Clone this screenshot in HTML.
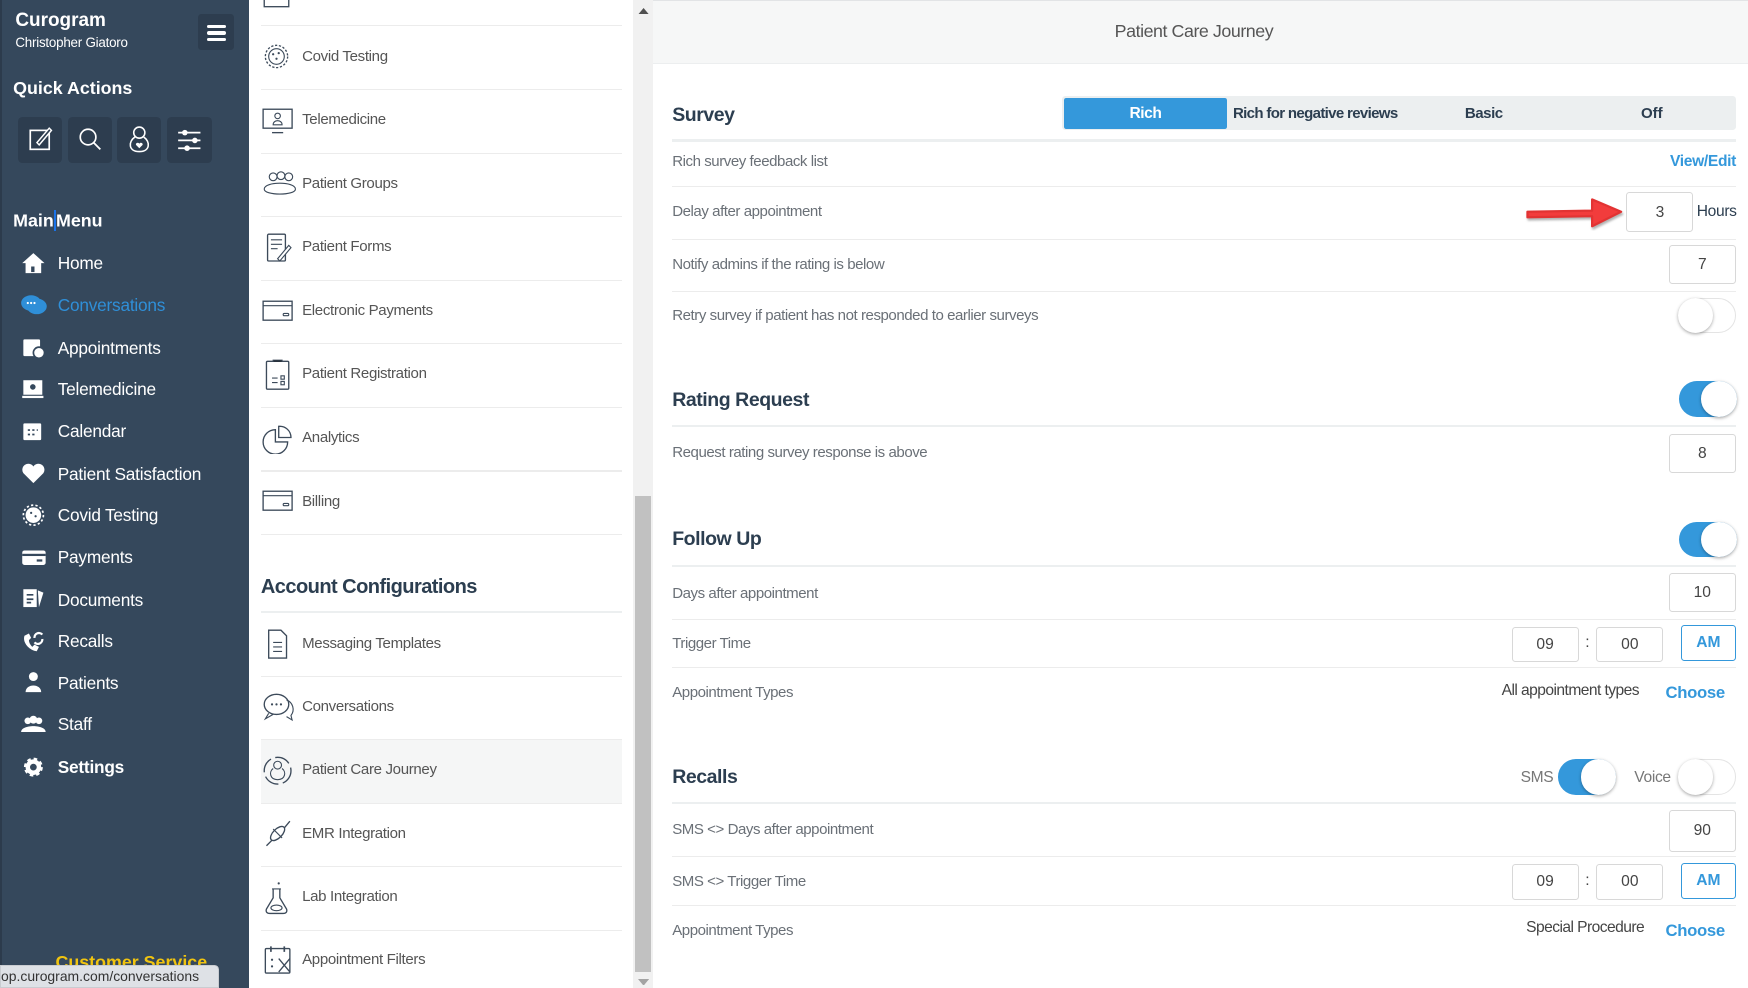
<!DOCTYPE html>
<html><head><meta charset="utf-8">
<style>
*{box-sizing:border-box;margin:0;padding:0}
html,body{width:1748px;height:988px;overflow:hidden;background:#fff}
#w{position:relative;width:1568px;height:886px;zoom:1.1148;font-family:"Liberation Sans",sans-serif;overflow:hidden}
.a{position:absolute;white-space:nowrap}
.t{position:absolute;white-space:nowrap;line-height:20px}
#side{position:absolute;left:0;top:0;width:223px;height:886px;background:#35485c;border-left:2px solid #2c3b4c}
.qa{position:absolute;top:105px;width:40px;height:41px;background:#2d3d4f;border-radius:4px}
.mi{position:absolute;left:50px;color:#fff;font-size:15.5px;line-height:20px;letter-spacing:-.2px}
.ic{position:absolute;left:16px}
#mid{position:absolute;left:223px;top:0;width:345px;height:886px;background:#fff}
.sep{position:absolute;left:234px;width:324px;height:1px;background:#ececec}
.ml{position:absolute;left:271px;font-size:13.5px;color:#555;line-height:20px;letter-spacing:-.3px}
.mic{position:absolute;left:235px}
#main{position:absolute;left:586px;top:0;width:982px;height:886px;background:#fff}
.lb{position:absolute;left:603px;font-size:13.5px;color:#6a7077;line-height:22px;letter-spacing:-.4px}
.hd{position:absolute;left:603px;font-size:17.5px;color:#2c3e50;font-weight:bold;line-height:22px;letter-spacing:-.4px}
.rs{position:absolute;left:603px;width:954px;height:1px;background:#ececec}
.rs2{position:absolute;left:603px;width:954px;height:2px;background:#eceff0}
.inp{position:absolute;width:60px;height:35px;border:1px solid #d8d8d8;border-radius:3px;font-size:14px;color:#444;text-align:center;line-height:33px;background:#fff}
.am{position:absolute;width:49px;height:32px;border:1px solid #3498db;border-radius:3px;font-size:14px;color:#3498db;font-weight:bold;text-align:center;line-height:30px}
.tg{position:absolute;width:52px;height:32px;border-radius:16px}
.tg.on{background:#3498db}
.tg.off{background:#fff;border:1px solid #e4e4e4}
.tg i{position:absolute;top:0;width:32px;height:32px;border-radius:50%;background:#fff;box-shadow:0 1px 3px rgba(0,0,0,.35)}
.tg.on i{right:0}
.tg.off i{left:-1px;top:-1px}
.bl{position:absolute;color:#3498db;font-weight:bold;font-size:15px;line-height:22px;letter-spacing:-.3px}
</style></head><body><div id="w">

<div id="side">
 <div class="a" style="left:12px;top:9px;color:#fff;font-weight:bold;font-size:17px">Curogram</div>
 <div class="a" style="left:12px;top:31px;color:#fff;font-size:12px;letter-spacing:-.2px">Christopher Giatoro</div>
 <div class="a" style="left:176px;top:13px;width:32px;height:32px;background:#2d3d4f;border-radius:3px">
  <div class="a" style="left:8px;top:9px;width:17px;height:3px;background:#fff;border-radius:2px"></div>
  <div class="a" style="left:8px;top:15px;width:17px;height:3px;background:#fff;border-radius:2px"></div>
  <div class="a" style="left:8px;top:21px;width:17px;height:3px;background:#fff;border-radius:2px"></div>
 </div>
 <div class="a" style="left:10px;top:70px;color:#fff;font-weight:bold;font-size:16px">Quick Actions</div>
 <div class="qa" style="left:14px"><svg width="40" height="41"><rect x="11" y="12" width="17" height="17" fill="none" stroke="#fff" stroke-width="1.5"/><path d="M17 23 L28 10 L30 12 L19 25 Z" fill="#2d3d4f" stroke="#fff" stroke-width="1.3"/></svg></div>
 <div class="qa" style="left:59px"><svg width="40" height="41"><circle cx="18" cy="18" r="7" fill="none" stroke="#fff" stroke-width="1.5"/><path d="M23 23 L29 29" stroke="#fff" stroke-width="1.6"/></svg></div>
 <div class="qa" style="left:103px"><svg width="40" height="41"><circle cx="20" cy="14" r="5" fill="none" stroke="#fff" stroke-width="1.4"/><path d="M16 18 C10 22 10 31 20 31 C30 31 30 22 24 18" fill="none" stroke="#fff" stroke-width="1.4"/><path d="M20 28 l-3-3 a1.6 1.6 0 0 1 3-1 a1.6 1.6 0 0 1 3 1z" fill="#fff"/></svg></div>
 <div class="qa" style="left:148px"><svg width="40" height="41"><path d="M10 14h20M10 21h20M10 28h20" stroke="#fff" stroke-width="1.6"/><circle cx="16" cy="14" r="2.5" fill="#fff"/><circle cx="25" cy="21" r="2.5" fill="#fff"/><circle cx="18" cy="28" r="2.5" fill="#fff"/></svg></div>
 <div class="a" style="left:10px;top:188px;color:#fff;font-weight:bold;font-size:16px">Main<span style="display:inline-block;width:2px;height:19px;background:#1a73e8;vertical-align:-4px"></span>Menu</div>

 <svg class="ic" style="top:226px" width="24" height="20"><path d="M2 10 L12 1 L22 10 L19 10 L19 19 L5 19 L5 10Z" fill="#fff"/><rect x="10" y="13" width="3" height="5" fill="#35485c"/></svg>
 <div class="mi" style="top:226px">Home</div>
 <svg class="ic" style="top:263px" width="26" height="22"><ellipse cx="10" cy="9" rx="9" ry="7" fill="#2f8fd8"/><ellipse cx="15" cy="12" rx="9" ry="7" fill="#2f8fd8"/><circle cx="7" cy="9" r="1" fill="#fff"/><circle cx="10" cy="9" r="1" fill="#fff"/><circle cx="13" cy="9" r="1" fill="#fff"/></svg>
 <div class="mi" style="top:264px;color:#2f8fd8">Conversations</div>
 <svg class="ic" style="top:301px" width="24" height="20"><rect x="3" y="3" width="15" height="15" rx="1" fill="#fff"/><circle cx="17" cy="15" r="5" fill="#fff" stroke="#35485c" stroke-width="1.5"/></svg>
 <div class="mi" style="top:302px">Appointments</div>
 <svg class="ic" style="top:339px" width="24" height="20"><rect x="3" y="2" width="17" height="13" fill="#fff"/><rect x="2" y="16" width="19" height="2" fill="#fff"/><circle cx="11.5" cy="8" r="2.5" fill="#35485c"/></svg>
 <div class="mi" style="top:339px">Telemedicine</div>
 <svg class="ic" style="top:377px" width="24" height="20"><rect x="3" y="3" width="16" height="15" rx="1" fill="#fff"/><path d="M7 9h2M11 9h2M15 9h1M7 13h2M11 13h2" stroke="#35485c" stroke-width="1.5"/></svg>
 <div class="mi" style="top:377px">Calendar</div>
 <svg class="ic" style="top:414px" width="24" height="20"><path d="M12 19 L3 10 A5 5 0 0 1 12 4 A5 5 0 0 1 21 10Z" fill="#fff"/></svg>
 <div class="mi" style="top:415px">Patient Satisfaction</div>
 <svg class="ic" style="top:452px" width="24" height="20"><circle cx="12" cy="10" r="7" fill="#fff"/><circle cx="12" cy="10" r="9" fill="none" stroke="#fff" stroke-width="1.5" stroke-dasharray="2 2"/><circle cx="10" cy="8" r="1" fill="#35485c"/><circle cx="14" cy="11" r="1" fill="#35485c"/></svg>
 <div class="mi" style="top:452px">Covid Testing</div>
 <svg class="ic" style="top:490px" width="24" height="20"><rect x="2" y="4" width="21" height="13" rx="2" fill="#fff"/><rect x="2" y="7" width="21" height="2" fill="#35485c"/><rect x="15" y="12" width="5" height="2" fill="#35485c"/></svg>
 <div class="mi" style="top:490px">Payments</div>
 <svg class="ic" style="top:527px" width="24" height="20"><rect x="3" y="2" width="12" height="16" fill="#fff"/><path d="M16 3 L21 5 L17 18" fill="#fff"/><path d="M6 7h6M6 11h6M6 14h4" stroke="#35485c" stroke-width="1.5"/></svg>
 <div class="mi" style="top:528px">Documents</div>
 <svg class="ic" style="top:564px" width="24" height="22"><path d="M4 6 C2 12 8 19 15 20 L17 16 L13 14 L11 16 C9 14 8 12 8 10 L10 8 L8 4Z" fill="#fff"/><path d="M13 8 A4 4 0 0 1 20 5 M20 9 A4 4 0 0 1 13 12" fill="none" stroke="#fff" stroke-width="2"/></svg>
 <div class="mi" style="top:565px">Recalls</div>
 <svg class="ic" style="top:602px" width="24" height="20"><circle cx="12" cy="5" r="4" fill="#fff"/><path d="M5 19 C5 11 19 11 19 19Z" fill="#fff"/></svg>
 <div class="mi" style="top:603px">Patients</div>
 <svg class="ic" style="top:640px" width="24" height="20"><circle cx="7" cy="7" r="3" fill="#fff"/><circle cx="17" cy="7" r="3" fill="#fff"/><circle cx="12" cy="6" r="3.5" fill="#fff"/><path d="M1 17 C1 10 23 10 23 17Z" fill="#fff"/></svg>
 <div class="mi" style="top:640px">Staff</div>
 <svg class="ic" style="top:678px" width="24" height="20"><circle cx="12" cy="10" r="7" fill="#fff" stroke="#fff" stroke-width="3" stroke-dasharray="3 2.5"/><circle cx="12" cy="10" r="3" fill="#35485c"/></svg>
 <div class="mi" style="top:678px;font-weight:bold">Settings</div>
 <div class="a" style="left:48px;top:854px;color:#f1c40f;font-weight:bold;font-size:16px">Customer Service</div>
</div>
<div class="a" style="left:0;top:866px;width:196px;height:20px;background:#dee1e6;border:1px solid #c9ccd1;border-radius:0 4px 0 0;font-size:12.5px;color:#333;line-height:19px;padding-left:0;overflow:hidden">op.curogram.com/conversations</div>

<div id="mid"></div>
<div class="sep" style="top:22px"></div>
<div class="sep" style="top:80px"></div>
<div class="sep" style="top:137px"></div>
<div class="sep" style="top:194px"></div>
<div class="sep" style="top:251px"></div>
<div class="sep" style="top:308px"></div>
<div class="sep" style="top:365px"></div>
<div class="sep" style="top:422px"></div>
<div class="sep" style="top:479px"></div>
<svg class="mic" style="top:0" width="28" height="8"><rect x="2" y="-6" width="22" height="12" fill="none" stroke="#3c4a5a" stroke-width="1.2"/></svg>

<svg class="mic" style="top:38px" width="28" height="28"><circle cx="13" cy="13" r="10" fill="none" stroke="#3c4a5a" stroke-width="1.2" stroke-dasharray="2 1.5"/><circle cx="13" cy="13" r="7" fill="none" stroke="#3c4a5a" stroke-width="1"/><circle cx="10" cy="11" r="1" fill="#3c4a5a"/><circle cx="15" cy="10" r="1" fill="#3c4a5a"/><circle cx="13" cy="15" r="1" fill="#3c4a5a"/></svg>
<div class="ml" style="top:41px">Covid Testing</div>
<svg class="mic" style="top:96px" width="28" height="26"><rect x="1" y="2" width="26" height="17" fill="none" stroke="#3c4a5a" stroke-width="1.2"/><path d="M9 23h10" stroke="#3c4a5a" stroke-width="1.2"/><circle cx="14" cy="8" r="2.5" fill="none" stroke="#3c4a5a"/><path d="M10 16 C10 11 18 11 18 16Z" fill="none" stroke="#3c4a5a"/></svg>
<div class="ml" style="top:98px">Telemedicine</div>
<svg class="mic" style="top:152px" width="32" height="26"><circle cx="10" cy="7" r="3.5" fill="none" stroke="#3c4a5a"/><circle cx="17" cy="6" r="3.5" fill="none" stroke="#3c4a5a"/><circle cx="24" cy="7" r="3.5" fill="none" stroke="#3c4a5a"/><path d="M2 18 C2 11 30 11 30 18 C30 24 2 24 2 18Z" fill="none" stroke="#3c4a5a"/></svg>
<div class="ml" style="top:155px">Patient Groups</div>
<svg class="mic" style="top:208px" width="28" height="28"><rect x="5" y="2" width="16" height="24" rx="1" fill="none" stroke="#3c4a5a" stroke-width="1.2"/><path d="M8 7h10M8 11h10M8 15h6" stroke="#3c4a5a"/><path d="M14 24 L24 12 L26 14 L16 26Z" fill="#fff" stroke="#3c4a5a"/></svg>
<div class="ml" style="top:212px">Patient Forms</div>
<svg class="mic" style="top:268px" width="28" height="22"><rect x="1" y="2" width="26" height="17" fill="none" stroke="#3c4a5a" stroke-width="1.2"/><path d="M1 6h26" stroke="#3c4a5a"/><rect x="19" y="13" width="5" height="2" rx="1" fill="none" stroke="#3c4a5a"/></svg>
<div class="ml" style="top:269px">Electronic Payments</div>
<svg class="mic" style="top:321px" width="28" height="30"><rect x="4" y="3" width="20" height="25" rx="1" fill="none" stroke="#3c4a5a" stroke-width="1.2"/><path d="M10 3v-1h8v1" stroke="#3c4a5a"/><path d="M9 18h5M9 22h5M14 11h0" stroke="#3c4a5a"/><rect x="17" y="16" width="3" height="3" fill="none" stroke="#3c4a5a"/><rect x="17" y="21" width="3" height="3" fill="none" stroke="#3c4a5a"/></svg>
<div class="ml" style="top:326px">Patient Registration</div>
<svg class="mic" style="top:379px" width="30" height="28"><path d="M12 6 A11 11 0 1 0 23 17 L12 17Z" fill="none" stroke="#3c4a5a" stroke-width="1.2"/><path d="M15 3 A10 10 0 0 1 26 13 L15 13Z" fill="none" stroke="#3c4a5a" stroke-width="1.2"/></svg>
<div class="ml" style="top:383px">Analytics</div>
<svg class="mic" style="top:439px" width="28" height="22"><rect x="1" y="2" width="26" height="17" fill="none" stroke="#3c4a5a" stroke-width="1.2"/><path d="M1 6h26" stroke="#3c4a5a"/><rect x="19" y="13" width="5" height="2" rx="1" fill="none" stroke="#3c4a5a"/></svg>
<div class="ml" style="top:440px">Billing</div>

<div class="a" style="left:234px;top:517px;font-weight:bold;font-size:18px;color:#2c3e50;letter-spacing:-.5px">Account Configurations</div>
<div class="a" style="left:234px;top:548px;width:324px;height:2px;background:#eceff0"></div>
<div class="sep" style="top:606px"></div>
<div class="a" style="left:234px;top:664px;width:324px;height:56px;background:#f5f6f6"></div>
<div class="sep" style="top:663px"></div>
<div class="sep" style="top:720px"></div>
<div class="sep" style="top:777px"></div>
<div class="sep" style="top:834px"></div>
<svg class="mic" style="top:563px" width="28" height="30"><path d="M6 2h11l5 5v20H6Z" fill="none" stroke="#3c4a5a" stroke-width="1.2"/><path d="M10 13h8M10 17h8M10 21h8" stroke="#3c4a5a"/></svg>
<div class="ml" style="top:568px">Messaging Templates</div>
<svg class="mic" style="top:620px" width="30" height="28"><ellipse cx="13" cy="12" rx="11" ry="9" fill="none" stroke="#3c4a5a" stroke-width="1.2"/><path d="M6 20 L3 25 L10 21" fill="none" stroke="#3c4a5a"/><path d="M22 8 A9 9 0 0 1 26 22 L27 26 L22 23" fill="none" stroke="#3c4a5a"/><circle cx="9" cy="12" r="1" fill="#3c4a5a"/><circle cx="13" cy="12" r="1" fill="#3c4a5a"/><circle cx="17" cy="12" r="1" fill="#3c4a5a"/></svg>
<div class="ml" style="top:624px">Conversations</div>
<svg class="mic" style="top:676px" width="30" height="30"><circle cx="14" cy="15" r="12" fill="none" stroke="#3c4a5a" stroke-width="1.2" stroke-dasharray="14 4"/><circle cx="14" cy="10" r="3.5" fill="none" stroke="#3c4a5a"/><path d="M10 13 C6 16 7 23 14 23 C21 23 22 16 18 13" fill="none" stroke="#3c4a5a"/></svg>
<div class="ml" style="top:681px">Patient Care Journey</div>
<svg class="mic" style="top:735px" width="28" height="26"><path d="M4 24 L9 19 M20 8 L25 2" stroke="#3c4a5a" stroke-width="1.2"/><ellipse cx="14" cy="13" rx="8" ry="4" transform="rotate(-45 14 13)" fill="none" stroke="#3c4a5a" stroke-width="1.2"/><path d="M10 9 L18 17" stroke="#3c4a5a"/></svg>
<div class="ml" style="top:738px">EMR Integration</div>
<svg class="mic" style="top:789px" width="28" height="32"><path d="M10 8v8 L4 26 C3 29 5 30 7 30 H19 C21 30 23 29 22 26 L16 16 V8" fill="none" stroke="#3c4a5a" stroke-width="1.2"/><path d="M9 8h8" stroke="#3c4a5a"/><ellipse cx="13" cy="25" rx="5" ry="2.5" fill="none" stroke="#3c4a5a"/><circle cx="15" cy="3" r="1" fill="#3c4a5a"/></svg>
<div class="ml" style="top:795px">Lab Integration</div>
<svg class="mic" style="top:846px" width="30" height="30"><rect x="3" y="5" width="22" height="22" rx="1" fill="none" stroke="#3c4a5a" stroke-width="1.2"/><path d="M8 3v5M20 3v5" stroke="#3c4a5a" stroke-width="1.5"/><circle cx="9" cy="15" r="1" fill="#3c4a5a"/><circle cx="9" cy="21" r="1" fill="#3c4a5a"/><path d="M15 14 L25 26 M25 14 L15 26" stroke="#3c4a5a" stroke-width="1.2"/></svg>
<div class="ml" style="top:851px">Appointment Filters</div>

<div class="a" style="left:568px;top:0;width:18px;height:886px;background:#f1f1f1"></div>
<div class="a" style="left:570px;top:445px;width:14px;height:427px;background:#c1c1c1"></div>
<svg class="a" style="left:572px;top:7px" width="10" height="6"><path d="M0 6 L5 0 L10 6Z" fill="#505050"/></svg>
<svg class="a" style="left:572px;top:878px" width="10" height="6"><path d="M0 0 L5 6 L10 0Z" fill="#a3a3a3"/></svg>

<div id="main"></div>
<div class="a" style="left:586px;top:0;width:982px;height:57px;background:#f6f7f7;border-bottom:1px solid #eceeef;border-top:1px solid #e2e4e6"></div>
<div class="t" style="left:586px;width:970px;text-align:center;top:18px;font-size:16px;color:#555;letter-spacing:-.4px">Patient Care Journey</div>

<div class="hd" style="top:92px">Survey</div>
<div class="a" style="left:953px;top:86px;width:604px;height:31px;background:#eceff0;border-radius:3px"></div>
<div class="a" style="left:954px;top:88px;width:147px;height:28px;background:#3498db;border-radius:2px;color:#fff;font-weight:bold;font-size:14px;text-align:center;line-height:29px;letter-spacing:-.4px">Rich</div>
<div class="t" style="left:1106px;top:92px;font-size:13.5px;color:#2c3e50;font-weight:bold;letter-spacing:-.6px">Rich for negative reviews</div>
<div class="t" style="left:1314px;top:92px;font-size:13.5px;color:#2c3e50;font-weight:bold;letter-spacing:-.4px">Basic</div>
<div class="t" style="left:1472px;top:92px;font-size:13.5px;color:#2c3e50;font-weight:bold">Off</div>
<div class="rs2" style="top:125px"></div>
<div class="lb" style="top:135px">Rich survey feedback list</div>
<div class="bl" style="left:1498px;top:135px;font-size:14px">View/Edit</div>
<div class="rs" style="top:167px"></div>
<div class="lb" style="top:179px">Delay after appointment</div>
<svg class="a" style="left:1366px;top:175px" width="92" height="32"><path d="M4 15 L62 14 L62 4 L88 15 L62 28 L62 19 L4 20Z" fill="#f23c3c" stroke="#e23333" stroke-width="2" stroke-linejoin="round" style="filter:drop-shadow(1px 2px 1px rgba(0,0,0,.3))"/></svg>
<div class="inp" style="left:1459px;top:172px;height:36px;line-height:35px">3</div>
<div class="t" style="left:1522px;top:180px;font-size:14px;color:#2c3e50;letter-spacing:-.3px">Hours</div>
<div class="rs" style="top:214px"></div>
<div class="lb" style="top:227px">Notify admins if the rating is below</div>
<div class="inp" style="left:1497px;top:220px;line-height:34px">7</div>
<div class="rs" style="top:261px"></div>
<div class="lb" style="top:273px">Retry survey if patient has not responded to earlier surveys</div>
<div class="tg off" style="left:1505px;top:267px"><i></i></div>

<div class="hd" style="top:348px">Rating Request</div>
<div class="tg on" style="left:1506px;top:342px"><i></i></div>
<div class="rs2" style="top:381px"></div>
<div class="lb" style="top:396px">Request rating survey response is above</div>
<div class="inp" style="left:1497px;top:389px;line-height:34px">8</div>

<div class="hd" style="top:473px">Follow Up</div>
<div class="tg on" style="left:1506px;top:468px"><i></i></div>
<div class="rs2" style="top:507px"></div>
<div class="lb" style="top:522px">Days after appointment</div>
<div class="inp" style="left:1497px;top:514px;line-height:34px">10</div>
<div class="rs" style="top:555px"></div>
<div class="lb" style="top:567px">Trigger Time</div>
<div class="inp" style="left:1356px;top:562px;height:32px;line-height:31px">09</div>
<div class="t" style="left:1422px;top:567px;font-size:14px;color:#444">:</div>
<div class="inp" style="left:1432px;top:562px;height:32px;line-height:31px">00</div>
<div class="am" style="left:1508px;top:561px;line-height:31px">AM</div>
<div class="rs" style="top:598px"></div>
<div class="lb" style="top:611px">Appointment Types</div>
<div class="t" style="left:1347px;top:610px;font-size:14px;color:#444;letter-spacing:-.5px">All appointment types</div>
<div class="bl" style="left:1494px;top:611px">Choose</div>

<div class="hd" style="top:686px">Recalls</div>
<div class="t" style="left:1364px;top:688px;font-size:14px;color:#777;letter-spacing:-.3px">SMS</div>
<div class="tg on" style="left:1398px;top:681px"><i></i></div>
<div class="t" style="left:1466px;top:688px;font-size:14px;color:#777;letter-spacing:-.3px">Voice</div>
<div class="tg off" style="left:1505px;top:681px"><i></i></div>
<div class="rs2" style="top:719px"></div>
<div class="lb" style="top:734px">SMS &lt;&gt; Days after appointment</div>
<div class="inp" style="left:1497px;top:727px;height:37px;line-height:36px">90</div>
<div class="rs" style="top:768px"></div>
<div class="lb" style="top:780px">SMS &lt;&gt; Trigger Time</div>
<div class="inp" style="left:1356px;top:775px;height:32px;line-height:31px">09</div>
<div class="t" style="left:1422px;top:780px;font-size:14px;color:#444">:</div>
<div class="inp" style="left:1432px;top:775px;height:32px;line-height:31px">00</div>
<div class="am" style="left:1508px;top:774px;line-height:31px">AM</div>
<div class="rs" style="top:812px"></div>
<div class="lb" style="top:824px">Appointment Types</div>
<div class="t" style="left:1369px;top:823px;font-size:14px;color:#444;letter-spacing:-.5px">Special Procedure</div>
<div class="bl" style="left:1494px;top:824px">Choose</div>

</div></body></html>
